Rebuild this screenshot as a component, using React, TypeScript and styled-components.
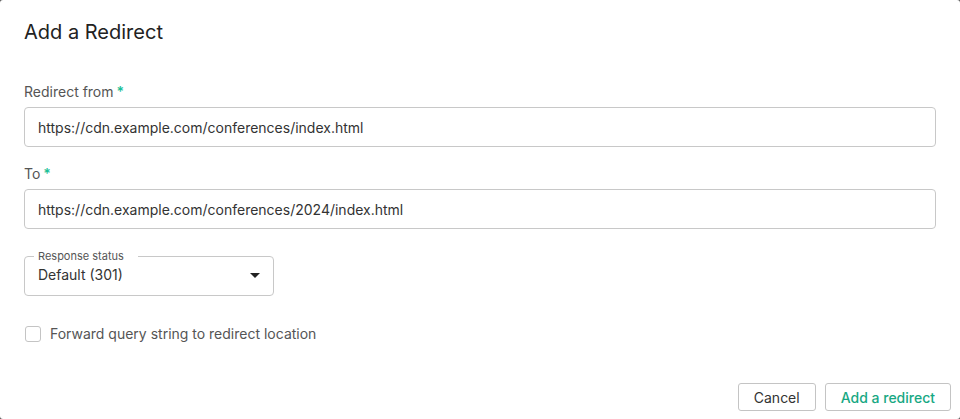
import React from "react";
import styled, { createGlobalStyle } from "styled-components";

const Global = createGlobalStyle`
  html, body { margin: 0; padding: 0; background: #5a5a5a; }
  body { font-family: Inter, "Noto Sans", sans-serif; }
  * { box-sizing: border-box; }
`;

const Dialog = styled.div`
  width: 960px;
  height: 419px;
  background: #fff;
  border-radius: 3px;
  display: flex;
  flex-direction: column;
  overflow: hidden;
`;

const Header = styled.div`
  padding: 20px 24px 0 24px;
`;

const Title = styled.h2`
  margin: 0;
  font-size: 20px;
  line-height: 24px;
  font-weight: 400;
  color: #222;
`;

const Body = styled.div`
  padding: 38px 24px 0 24px;
  display: flex;
  flex-direction: column;
`;

const Field = styled.div<{ $gap?: number }>`
  display: flex;
  flex-direction: column;
  margin-top: ${(p) => p.$gap ?? 0}px;
`;

const Label = styled.label`
  font-size: 14px;
  line-height: 20px;
  color: #555;
  margin-bottom: 5px;
`;

const Required = styled.span`
  color: #1cbf96;
  margin-left: 3px;
  font-weight: 600;
`;

const Input = styled.div`
  height: 40px;
  border: 1px solid #c8c8c8;
  border-radius: 4px;
  display: flex;
  align-items: center;
  padding: 0 13px;
  font-size: 14px;
  color: #333;
`;

const Select = styled.div`
  position: relative;
  width: 250px;
  height: 40px;
  margin-top: 27px;
  border: 1px solid #c8c8c8;
  border-radius: 4px;
  display: flex;
  align-items: center;
  justify-content: space-between;
  padding: 0 13px 3px 13px;
  font-size: 14px;
  color: #333;
`;

const Legend = styled.span`
  position: absolute;
  left: 9px;
  top: -8px;
  padding: 0 14px 0 4px;
  background: #fff;
  font-size: 11px;
  line-height: 14px;
  color: #555;
`;

const Caret = styled.span`
  width: 0;
  height: 0;
  border-left: 5px solid transparent;
  border-right: 5px solid transparent;
  border-top: 5px solid #222;
  margin-top: 2px;
`;

const CheckRow = styled.label`
  display: flex;
  align-items: center;
  gap: 9px;
  margin-top: 29px;
  margin-left: 1px;
  font-size: 14px;
  color: #555;
`;

const Box = styled.span`
  width: 16px;
  height: 16px;
  border: 1px solid #c4c4c4;
  border-radius: 3px;
  background: #fff;
`;

const Footer = styled.div`
  margin-top: 41px;
  padding-right: 9px;
  display: flex;
  justify-content: flex-end;
  gap: 9px;
`;

const Button = styled.button<{ $primary?: boolean }>`
  height: 28px;
  padding: 0 15px;
  border: 1px solid #c4c4c4;
  border-radius: 3px;
  background: #fff;
  font-family: Inter, "Noto Sans", sans-serif;
  font-size: 14px;
  font-weight: ${(p) => (p.$primary ? 500 : 400)};
  color: ${(p) => (p.$primary ? "#17a883" : "#333")};
`;

export default function App() {
  return (
    <>
      <Global />
      <Dialog>
        <Header>
          <Title>Add a Redirect</Title>
        </Header>
        <Body>
          <Field>
            <Label>
              Redirect from<Required>*</Required>
            </Label>
            <Input>https://cdn.example.com/conferences/index.html</Input>
          </Field>
          <Field $gap={17}>
            <Label>
              To<Required>*</Required>
            </Label>
            <Input>https://cdn.example.com/conferences/2024/index.html</Input>
          </Field>
          <Select>
            <Legend>Response status</Legend>
            <span>Default (301)</span>
            <Caret />
          </Select>
          <CheckRow>
            <Box />
            Forward query string to redirect location
          </CheckRow>
        </Body>
        <Footer>
          <Button>Cancel</Button>
          <Button $primary>Add a redirect</Button>
        </Footer>
      </Dialog>
    </>
  );
}
